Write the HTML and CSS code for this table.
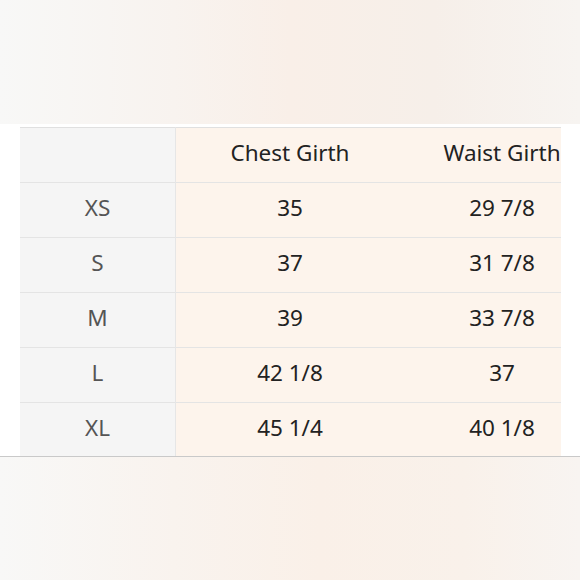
FILE: index.html
```html
<!DOCTYPE html>
<html>
<head>
<meta charset="utf-8">
<link rel="stylesheet" href="styles.css">
</head>
<body>
<div class="band band-top"></div>
<div class="middle">
  <div class="table-wrap">
    <table class="size-table">
      <tr class="head">
        <th class="c1"></th><th class="c2">Chest Girth</th><th class="c3">Waist Girth</th>
      </tr>
      <tr><td class="c1">XS</td><td class="c2">35</td><td class="c3">29 7/8</td></tr>
      <tr><td class="c1">S</td><td class="c2">37</td><td class="c3">31 7/8</td></tr>
      <tr><td class="c1">M</td><td class="c2">39</td><td class="c3">33 7/8</td></tr>
      <tr><td class="c1">L</td><td class="c2">42 1/8</td><td class="c3">37</td></tr>
      <tr><td class="c1">XL</td><td class="c2">45 1/4</td><td class="c3">40 1/8</td></tr>
    </table>
  </div>
</div>
<div class="band band-bottom"></div>
</body>
</html>
```
FILE: styles.css
```css
html, body {
  margin: 0;
  padding: 0;
  width: 580px;
  height: 580px;
  overflow: hidden;
  background: #ffffff;
  font-family: "Noto Sans", "Open Sans", sans-serif;
}
.band {
  width: 580px;
}
.band-top {
  height: 124px;
  background: linear-gradient(90deg, #f8f8f7 0%, #f8f3ef 30%, #f9efe8 50%, #f6efe9 75%, #f7f4f1 100%);
}
.band-bottom {
  height: 123px;
  border-top: 1px solid #c9c9c9;
  background: linear-gradient(90deg, #f8f8f7 0%, #f9f3ee 30%, #faf0e8 55%, #f9f1ea 80%, #f8f4f1 100%);
}
.middle {
  height: 332px;
  padding: 3px 0 0 20px;
  box-sizing: border-box;
}
.table-wrap {
  width: 541px;
  overflow: hidden;
}
.size-table {
  border-collapse: collapse;
  table-layout: fixed;
  width: 580px;
}
.size-table th, .size-table td {
  height: 50px;
  padding: 0 0 4px 0;
  text-align: center;
  font-size: 22.5px;
  line-height: 28px;
  font-weight: normal;
  border-top: 1px solid #e4e4e4;
}
.size-table .c1 {
  width: 155px;
  background: #f5f5f5;
  color: #555555;
  border-right: 1px solid #e6e6e6;
}
.size-table .c2 {
  width: 228px;
  background: #fdf4ec;
  color: #222222;
}
.size-table .c3 {
  width: 196px;
  background: #fdf4ec;
  color: #222222;
}
.size-table .head th {
  border-top: 1px solid #e0e0e0;
}
```
